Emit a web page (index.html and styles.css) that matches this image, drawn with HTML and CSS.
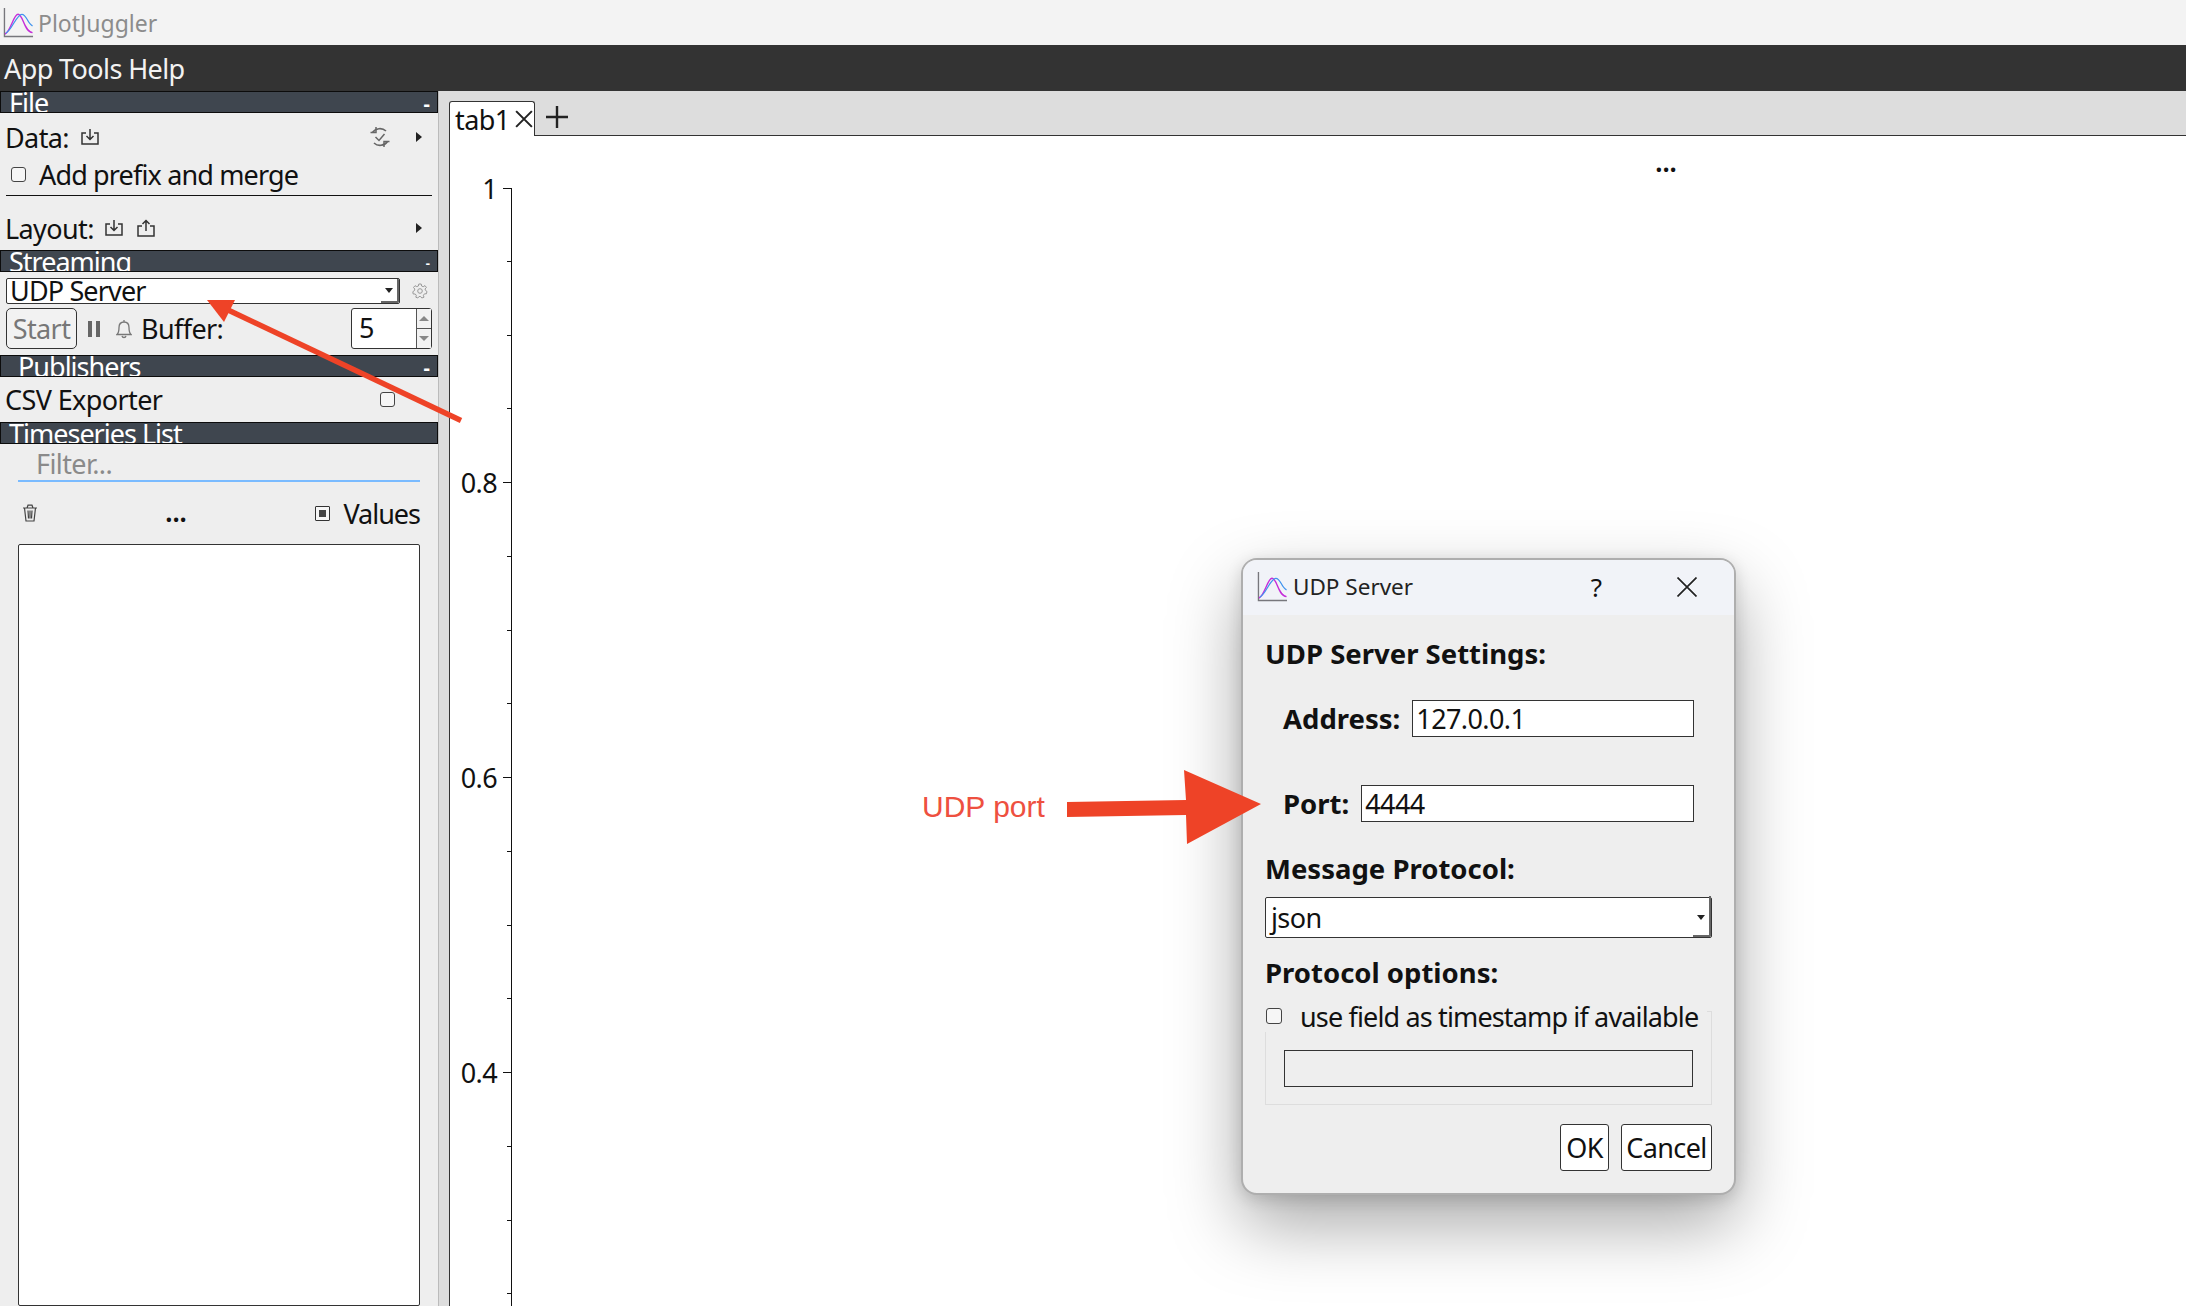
FILE: index.html
```html
<!DOCTYPE html>
<html lang="en">
<head>
<meta charset="utf-8">
<title>PlotJuggler</title>
<link rel="stylesheet" href="styles.css">
</head>
<body>
<svg class="defs" width="0" height="0" aria-hidden="true">
  <symbol id="logo" viewBox="0 0 32 32">
    <path d="M1.5 1V30.5H31" fill="none" stroke="#77777c" stroke-width="1.400"/>
    <path d="M2 28C8 25 11 7.500 15.500 7.500C21 7.500 21 25 30.500 26.500" fill="none" stroke="#c52ed8" stroke-width="1.400"/>
    <path d="M3 27C9 24 14 7.500 19.500 7.500C24.500 7.500 25 17 30.500 19.500" fill="none" stroke="#3f93ee" stroke-width="1.300"/>
  </symbol>
  <symbol id="import" viewBox="0 0 18 18">
    <path d="M5 5H1V16H17V5H13M9 1V11M5.5 8L9 11.5L12.500 8" fill="none" stroke="#333" stroke-width="1.500"/>
  </symbol>
  <symbol id="export" viewBox="0 0 18 18">
    <path d="M5 7H1V17H17V7H13M9 12V1.500M5.500 5L9 1.500L12.500 5" fill="none" stroke="#333" stroke-width="1.500"/>
  </symbol>
</svg>

<header class="titlebar">
  <svg class="logo-main"><use href="#logo"/></svg>
  <span>PlotJuggler</span>
</header>
<nav class="menubar">App Tools Help</nav>

<main class="workspace">
  <aside class="sidebar">
    <div class="section">File<span class="collapse">-</span></div>
    <div class="row row-data">
      <span>Data:</span>
      <svg class="ic ic-data"><use href="#import"/></svg>
      <svg class="ic-sync" viewBox="0 0 22 22">
        <path d="M3.500 6.500A9 9 0 0 1 17 5M18.500 15.500A9 9 0 0 1 5 17" fill="none" stroke="#666" stroke-width="1.600"/>
        <path d="M7 1V6.500H1.500M15 21V15.500H20.500M6.500 11L10 14.500L15.500 8" fill="none" stroke="#666" stroke-width="1.500"/>
      </svg>
      <span class="tri"></span>
    </div>
    <div class="row row-prefix">
      <span class="check check-side"></span>
      <span class="tight">Add prefix and merge</span>
    </div>
    <hr class="rule">
    <div class="row row-layout">
      <span>Layout:</span>
      <svg class="ic ic-layout"><use href="#import"/></svg>
      <svg class="ic ic-second"><use href="#export"/></svg>
      <span class="tri tri-auto"></span>
    </div>
    <div class="section">Streaming<span class="collapse collapse-dot">-</span></div>
    <div class="streamer">
      <div class="combo combo-small"><span class="tight">UDP Server</span><span class="combo-arrow"></span></div>
      <svg class="gear" viewBox="0 0 16 16">
        <circle cx="8" cy="8" r="2.300" fill="none" stroke="#999" stroke-width="1"/>
        <path d="M6.800 1H9.200L9.600 3L11.200 3.700L13 2.600L14.400 4.400L13 6L13.400 7.300L15 8.500L14.400 10.800L12.500 10.800L11.400 12.300L12 14.200L9.800 15L8.600 13.500H7L5.800 15L3.800 14.200L4.300 12.300L3.200 11L1.200 11L.8 8.700L2.500 7.500L2.800 6L1.500 4.500L3 2.700L4.800 3.600L6.400 3Z" fill="none" stroke="#999" stroke-width="1"/>
      </svg>
    </div>
    <div class="row row-start">
      <button class="btn btn-start">Start</button>
      <span class="pause"></span>
      <svg class="bell" viewBox="0 0 16 20">
        <path d="M1 15.500C3 13.500 3 12 3 8.500C3 5 5 3 8 3C11 3 13 5 13 8.500C13 12 13 13.500 15 15.500ZM6 17C6.500 19 9.500 19 10 17M8 3V1" fill="none" stroke="#777" stroke-width="1.300"/>
      </svg>
      <span class="buffer">Buffer:</span>
      <div class="spin">
        <span class="spin-value">5</span>
        <div class="spin-arrows">
          <span class="spin-btn"><i class="up"></i></span>
          <span class="spin-btn"><i class="down"></i></span>
        </div>
      </div>
    </div>
    <div class="section section-pub">Publishers<span class="collapse">-</span></div>
    <div class="row row-csv">
      <span>CSV Exporter</span>
      <span class="check check-csv"></span>
    </div>
    <div class="section">Timeseries List</div>
    <div class="filter">Filter...</div>
    <div class="row row-tools">
      <svg class="trash" viewBox="0 0 16 18">
        <path d="M1 4H15M5 4L6 1.200H10L11 4M2.500 4L4 17H12L13.500 4M6 6.500L6.500 14.500M8 6.500V14.500M10 6.500L9.500 14.500" fill="none" stroke="#444" stroke-width="1.200"/>
      </svg>
      <span class="dots">...</span>
      <span class="check check-on"><i></i></span>
      <span class="values">Values</span>
    </div>
    <div class="list"></div>
  </aside>

  <section class="plots">
    <div class="tabbar">
      <div class="tab">tab1
        <svg class="tab-x" viewBox="0 0 16 16"><path d="M1 1L15 15M15 1L1 15" stroke="#222" stroke-width="1.800"/></svg>
      </div>
      <svg class="tab-plus" viewBox="0 0 22 22"><path d="M0 11H22M11 0V22" stroke="#222" stroke-width="2.400"/></svg>
    </div>
    <div class="pane">
      <svg class="chart">
        <path class="axis" d="M61.500 52V1170M53 52.500H61M53 346.500H61M53 641.500H61M53 936.500H61M57 125.500H61M57 199.500H61M57 272.500H61M57 420.500H61M57 494.500H61M57 567.500H61M57 715.500H61M57 789.500H61M57 862.500H61M57 1010.500H61M57 1084.500H61M57 1157.500H61"/>
        <text class="tick" x="47" y="63">1</text>
        <text class="tick" x="47" y="357">0.8</text>
        <text class="tick" x="47" y="652">0.6</text>
        <text class="tick" x="47" y="947">0.4</text>
        <text class="chart-dots" x="1205" y="36">...</text>
      </svg>
    </div>
  </section>
</main>

<div class="dialog">
  <div class="dialog-title">
    <svg class="logo-dialog"><use href="#logo"/></svg>
    <span class="dialog-name">UDP Server</span>
    <span class="dialog-help">?</span>
    <svg class="dialog-x" viewBox="0 0 20 20"><path d="M.5 .5L19.500 19.500M19.500 .5L.5 19.500" stroke="#222" stroke-width="1.700"/></svg>
  </div>
  <div class="dialog-body">
    <div class="heading heading-first">UDP Server Settings:</div>
    <div class="field field-address"><b>Address:</b><span class="input">127.0.0.1</span></div>
    <div class="field field-port"><b>Port:</b><span class="input">4444</span></div>
    <div class="heading heading-msg">Message Protocol:</div>
    <div class="combo combo-large">json<span class="combo-arrow"></span></div>
    <div class="heading heading-opt">Protocol options:</div>
    <div class="group">
      <div class="group-legend"><span class="check check-dialog"></span><span class="tight">use field as timestamp if available</span></div>
      <div class="group-input"></div>
    </div>
    <div class="actions">
      <button class="btn btn-ok">OK</button>
      <button class="btn btn-cancel">Cancel</button>
    </div>
  </div>
</div>

<svg class="annotations" width="2186" height="1306">
  <path d="M461 420.500L226 309" stroke="#ee4327" stroke-width="5.500" fill="none"/>
  <path d="M207 300L235 300L224 322Z" fill="#ee4327"/>
  <path d="M1067 802L1186 800L1184 770L1261 804L1187 844L1186 815L1067 817Z" fill="#ee4327"/>
  <text class="note" x="922" y="817">UDP port</text>
</svg>
</body>
</html>
```

FILE: styles.css
```css
* { box-sizing: border-box; }
html, body { margin: 0; padding: 0; }
body {
  width: 2186px;
  height: 1306px;
  overflow: hidden;
  position: relative;
  display: flex;
  flex-direction: column;
  font-family: "Noto Sans", "Open Sans", sans-serif;
  font-size: 27px;
  letter-spacing: -.6px;
  color: #111;
  background: #fff;
}
.defs { position: absolute; }
.tight { letter-spacing: -.85px; }

.titlebar {
  height: 45px;
  flex: none;
  display: flex;
  align-items: center;
  padding-left: 3px;
  background: #f3f3f3;
  color: #8c8c8c;
  font-size: 23px;
  letter-spacing: 0;
}
.logo-main { width: 31px; height: 31px; margin-right: 4px; }
.menubar {
  height: 46px;
  flex: none;
  padding: 0 0 0 4px;
  line-height: 48px;
  background: #333;
  color: #f2f2f2;
}
.workspace { flex: 1; display: flex; min-height: 0; }

.sidebar {
  width: 439px;
  flex: none;
  display: flex;
  flex-direction: column;
  background: #eee;
  border-right: 1px solid #bbb;
  overflow: hidden;
}
.section {
  height: 22px;
  flex: none;
  display: flex;
  justify-content: space-between;
  padding: 0 9px 0 8px;
  overflow: hidden;
  background: #3f464f;
  border: 1px solid #0c0c0c;
  color: #fff;
  line-height: 22px;
  letter-spacing: -1px;
}
.section-pub { padding-left: 17px; }
.collapse { font-size: 20px; line-height: 24px; font-weight: 700; margin-right: -1px; }
.collapse-dot { font-size: 13px; }

.row { display: flex; align-items: center; flex: none; padding: 0 6px 0 5px; }
.row-data { margin-top: 5px; height: 38px; }
.row-prefix { height: 36px; }
.row-layout { margin-top: 10px; height: 44px; }
.row-start { margin: 4px 0 6px; height: 41px; padding-left: 6px; }
.row-csv { height: 45px; justify-content: space-between; }
.row-tools { height: 62px; padding: 0 18px 0 22px; }

.ic { width: 18px; height: 18px; flex: none; }
.ic-data { margin-left: 12px; }
.ic-layout { margin-left: 11px; }
.ic-second { margin-left: 14px; }
.ic-sync { width: 22px; height: 22px; margin-left: auto; flex: none; }
.tri {
  width: 0;
  height: 0;
  margin: 0 10px 0 25px;
  border-left: 6px solid #222;
  border-top: 5px solid transparent;
  border-bottom: 5px solid transparent;
}
.tri-auto { margin-left: auto; }

.check {
  display: inline-flex;
  align-items: center;
  justify-content: center;
  width: 15px;
  height: 15px;
  flex: none;
  border: 1px solid #444;
  border-radius: 3px;
  background: #f6f6f6;
}
.check-side { margin: 0 13px 0 6px; }
.check-csv { margin-right: 37px; }
.check-on { margin-left: auto; border-radius: 1px; border-color: #333; }
.check-on i { width: 7px; height: 7px; background: #444; }
.check-dialog { width: 16px; height: 16px; margin: 0 18px 0 1px; }

.rule { height: 1px; margin: 3px 6px 0; border: 0; background: #111; flex: none; }

.combo {
  display: flex;
  align-items: center;
  position: relative;
  background: #fff;
  border: 1px solid #333;
  border-radius: 2px;
}
.combo-small { width: 394px; height: 26px; padding-left: 3px; line-height: 28px; overflow: hidden; }
.combo-large { height: 41px; padding-left: 5px; margin-top: 10px; }
.combo-arrow {
  position: absolute;
  right: 6px;
  top: 50%;
  margin-top: -3px;
  border-top: 5px solid #222;
  border-left: 4px solid transparent;
  border-right: 4px solid transparent;
}
.combo::after {
  content: "";
  position: absolute;
  right: 0;
  bottom: 0;
  width: 16px;
  height: 100%;
  border-right: 2px solid #666;
  border-bottom: 2px solid #666;
  border-radius: 0 0 2px 0;
  clip-path: polygon(100% 0, 100% 100%, 0 100%, 0 90%, 80% 90%, 80% 0);
}
.streamer { display: flex; align-items: center; flex: none; margin-top: 6px; height: 26px; padding-left: 6px; }
.gear { width: 16px; height: 16px; margin-left: 12px; }

.btn {
  font: inherit;
  letter-spacing: inherit;
  color: #111;
  background: #fff;
  border: 1px solid #333;
  border-radius: 3px;
  padding: 0;
}
.btn-start { width: 71px; height: 41px; color: #777; background: #f2f2f2; line-height: 38px; border-radius: 5px; }
.pause { width: 12px; height: 16px; margin-left: 11px; flex: none; border-left: 4px solid #666; border-right: 4px solid #666; }
.bell { width: 16px; height: 20px; margin-left: 16px; flex: none; }
.buffer { margin-left: 9px; }
.spin {
  width: 81px;
  height: 41px;
  margin-left: auto;
  display: flex;
  background: #fff;
  border: 1px solid #333;
  border-radius: 3px;
}
.spin-value { flex: 1; padding-left: 7px; line-height: 38px; }
.spin-arrows { width: 15px; flex: none; display: flex; flex-direction: column; border-left: 1px solid #555; }
.spin-btn { flex: 1; display: flex; align-items: center; justify-content: center; background: #f2f2f2; border-bottom: 1px solid #555; }
.spin-btn:last-child { border-bottom: 0; }
.up, .down { border-left: 5px solid transparent; border-right: 5px solid transparent; }
.up { border-bottom: 5px solid #888; }
.down { border-top: 5px solid #888; }

.filter {
  height: 38px;
  flex: none;
  margin: 0 18px;
  padding-left: 18px;
  line-height: 40px;
  color: #8a8a8a;
  border-bottom: 2px solid #7abbff;
}
.trash { width: 16px; height: 18px; flex: none; }
.dots { position: relative; left: 127px; top: -2px; font-size: 28px; font-weight: 600; }
.values { margin-left: 13px; letter-spacing: -1px; }
.list { flex: 1; margin: 0 18px; background: #fff; border: 1px solid #333; border-radius: 2px; }

.plots { flex: 1; min-width: 0; display: flex; flex-direction: column; background: #ddd; padding-left: 10px; }
.tabbar { height: 45px; flex: none; display: flex; align-items: flex-start; border-bottom: 1px solid #333; }
.tab {
  display: flex;
  align-items: center;
  width: 86px;
  height: 35px;
  margin-top: 10px;
  padding-left: 5px;
  background: #fff;
  border: 1px solid #333;
  border-bottom: 0;
  border-radius: 3px 3px 0 0;
  line-height: 35px;
}
.tab-x { width: 18px; height: 18px; margin-left: 5px; flex: none; }
.tab-plus { width: 22px; height: 22px; margin: 15px 0 0 11px; }
.pane { flex: 1; min-height: 0; background: #fff; border-left: 1px solid #333; }
.chart { display: block; width: 100%; height: 100%; }
.axis { fill: none; stroke: #111; stroke-width: 1; }
.tick { text-anchor: end; fill: #111; }
.chart-dots { font-size: 28px; font-weight: 600; fill: #111; }

.dialog {
  position: absolute;
  left: 1241px;
  top: 558px;
  width: 495px;
  height: 637px;
  background: #eee;
  border: 2px solid #aeaeae;
  border-radius: 16px;
  box-shadow: 0 30px 70px rgba(0, 0, 0, .34), 0 4px 16px rgba(0, 0, 0, .14);
  overflow: hidden;
}
.dialog-title {
  height: 55px;
  display: flex;
  align-items: center;
  padding: 0 37px 2px 14px;
  background: #f1f3f8;
  letter-spacing: 0;
}
.logo-dialog { width: 31px; height: 31px; margin-right: 5px; flex: none; }
.dialog-name { font-size: 22.500px; color: #222; }
.dialog-help { margin-left: auto; margin-right: 75px; font-size: 26px; }
.dialog-x { width: 20px; height: 20px; flex: none; }
.dialog-body { padding: 0 22px 0 22px; }
.heading { font-weight: 700; font-size: 27.500px; letter-spacing: 0; line-height: 36px; }
.heading-first { margin-top: 21px; }
.heading-msg { margin-top: 29px; }
.heading-opt { margin-top: 17px; }
.field { display: flex; align-items: center; height: 37px; padding: 0 0 0 18px; }
.field b { margin-right: 12px; font-size: 27.500px; letter-spacing: 0; }
.field-address { margin-top: 28px; padding-right: 18px; }
.field-port { margin-top: 48px; padding-right: 18px; }
.input { flex: 1; height: 37px; padding-left: 3px; line-height: 35px; background: #fff; border: 1px solid #333; }
.group { position: relative; height: 94px; margin-top: 20px; border: 1px solid #ddd; }
.group-legend {
  position: absolute;
  left: -1px;
  top: -12px;
  padding-right: 9px;
  display: flex;
  align-items: center;
  height: 32px;
  white-space: nowrap;
  background: #eee;
}
.group-input { position: absolute; left: 18px; right: 18px; top: 38px; height: 37px; border: 1px solid #333; }
.actions { display: flex; justify-content: flex-end; gap: 12px; margin-top: 19px; }
.btn-ok { width: 49px; height: 47px; }
.btn-cancel { width: 91px; height: 47px; }

.annotations { position: absolute; left: 0; top: 0; pointer-events: none; }
.note { font-family: "Liberation Sans", Arial, sans-serif; font-size: 30px; letter-spacing: 0; fill: #ee5040; }
```
